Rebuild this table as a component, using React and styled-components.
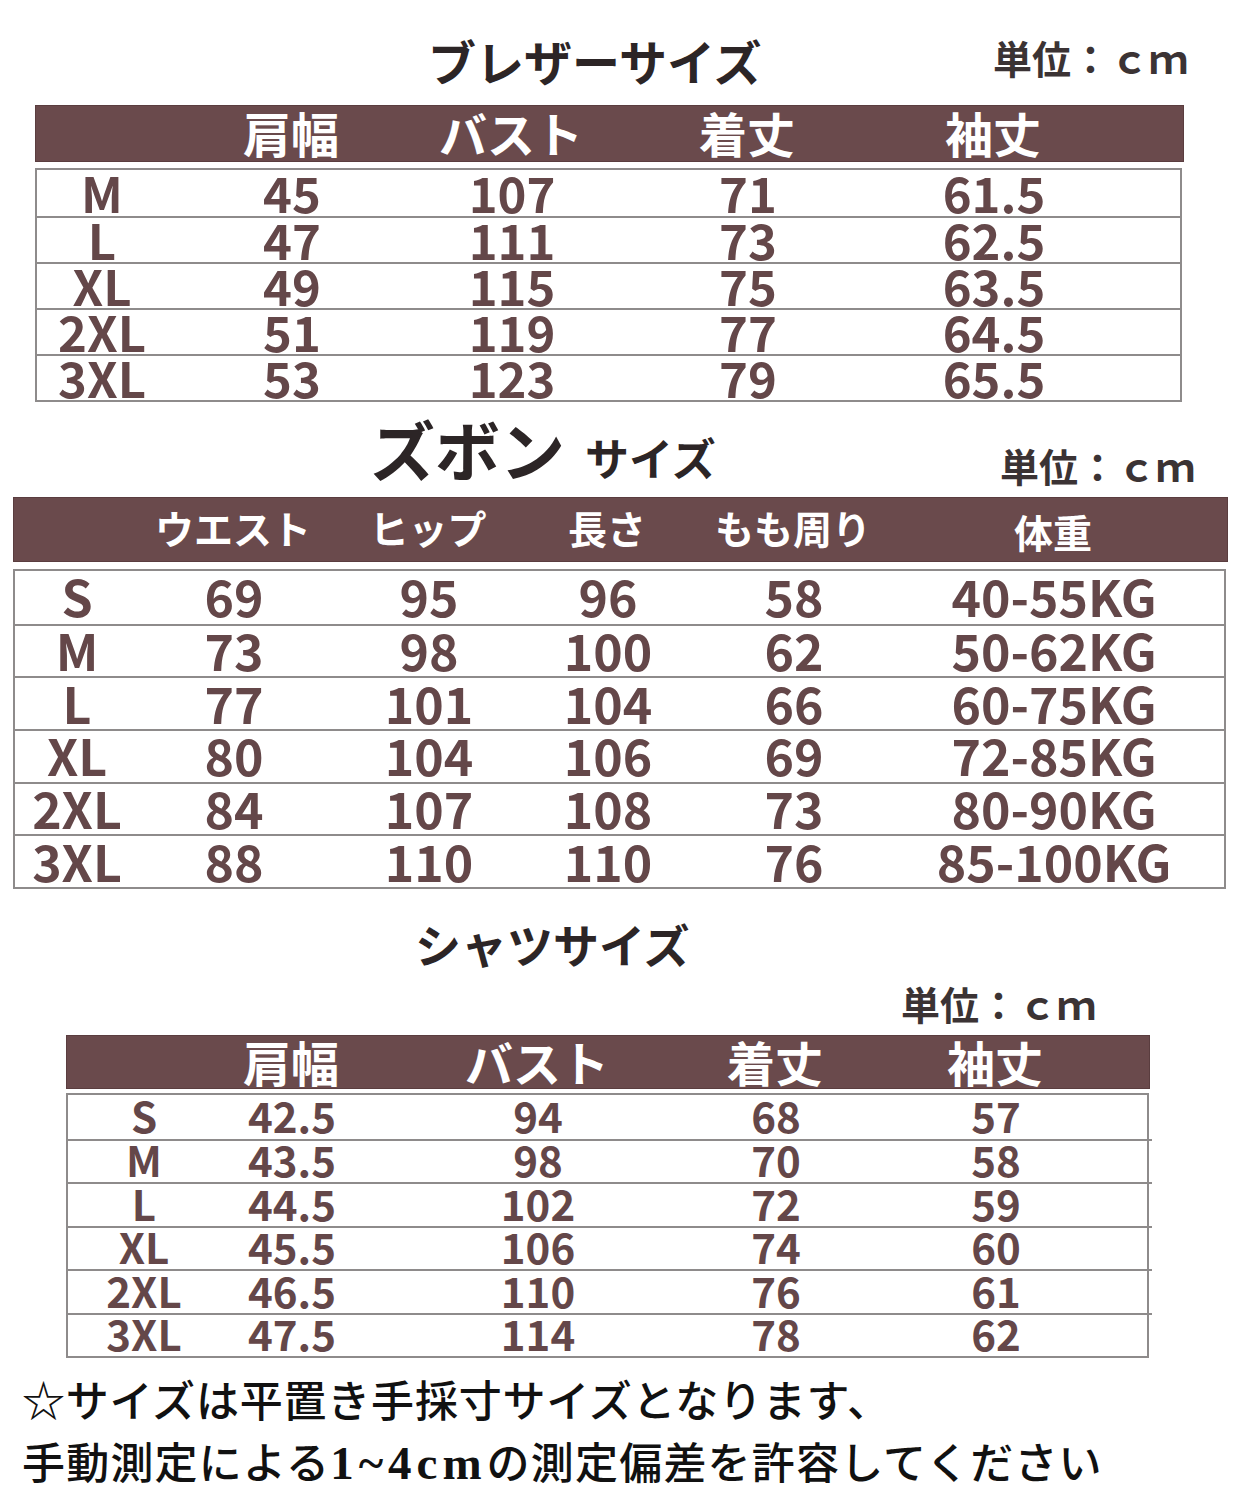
import React from 'react';
import styled, { createGlobalStyle } from 'styled-components';

const GlobalStyle = createGlobalStyle`
  html, body { margin: 0; padding: 0; background: #ffffff; }
  body { font-family: "Noto Sans CJK JP", "Noto Sans", sans-serif; }
`;

const BAR = '#6a4a4c';
const INK = '#644749';
const LINE = '#8e8b8b';

const Page = styled.div`
  width: 1243px;
  display: flex;
  flex-direction: column;
  background: #fff;
`;

const TitleRow = styled.div`
  height: ${p => p.$h}px;
  display: flex;
  flex-direction: ${p => (p.$stack ? 'column' : 'row')};
  align-items: flex-start;
`;

const Title = styled.div`
  margin-left: ${p => p.$left}px;
  margin-top: ${p => p.$top}px;
  font-size: ${p => p.$fs}px;
  font-weight: 700;
  line-height: 1;
  color: #2c2526;
  white-space: nowrap;
`;

const Small = styled.span`
  font-size: ${p => p.$fs}px;
  margin-left: ${p => p.$gap}px;
`;

const Unit = styled.div`
  margin-left: auto;
  margin-right: ${p => p.$right}px;
  margin-top: ${p => p.$top}px;
  align-self: ${p => (p.$stack ? 'flex-end' : 'auto')};
  font-size: 39px;
  font-weight: 700;
  line-height: 1;
  color: #3b3334;
  white-space: nowrap;
`;

const HeaderBar = styled.div`
  margin-left: ${p => p.$left}px;
  width: ${p => p.$width}px;
  height: ${p => p.$h}px;
  box-sizing: border-box;
  background: ${BAR};
  border: 1px solid #5a3d3f;
  display: grid;
  grid-template-columns: ${p => p.$cols};
  align-items: center;
  color: #ffffff;
`;

const HeadCell = styled.div`
  font-size: ${p => p.$fs}px;
  font-weight: 700;
  line-height: 1;
  text-align: center;
  white-space: nowrap;
  transform: translateY(${p => p.$dy}px);
`;

const Body = styled.div`
  margin-left: ${p => p.$left}px;
  margin-top: ${p => p.$gap}px;
  width: ${p => p.$width}px;
  height: ${p => p.$h}px;
  box-sizing: border-box;
  border: 2px solid ${LINE};
  display: grid;
  grid-template-rows: repeat(${p => p.$n}, minmax(0, 1fr));
`;

const Row = styled.div`
  display: grid;
  grid-template-columns: ${p => p.$cols};
  align-items: center;
  min-height: 0;
  & + & { border-top: 2px solid ${LINE}; }
`;

const Cell = styled.div`
  font-size: ${p => p.$fs}px;
  font-weight: 700;
  line-height: 1;
  height: 0;
  display: flex;
  align-items: center;
  justify-content: center;
  color: ${INK};
  white-space: nowrap;
  transform: translateY(${p => p.$dy}px);
`;

const Footer = styled.div`
  padding: 15px 0 0 22px;
  font-family: "Liberation Serif", "Noto Sans CJK JP", serif;
  font-size: 43px;
  font-weight: 500;
  line-height: 60px;
  color: #111;
`;

const FooterLine = styled.div`
  white-space: nowrap;
  letter-spacing: ${p => p.$ls || 0}px;
`;

const Latin = styled.span`
  font-size: 47px;
  font-weight: 700;
  letter-spacing: 5px;
`;

const tpl = cols => cols.map(c => `${c}px`).join(' ') + ' 1fr';

const blazer = {
  left: 35, width: 1149, bodyWidth: 1147,
  cols: [130, 250, 190, 282, 210],
  heads: ['', '肩幅', 'バスト', '着丈', '袖丈'],
  rows: [
    ['M', '45', '107', '71', '61.5'],
    ['L', '47', '111', '73', '62.5'],
    ['XL', '49', '115', '75', '63.5'],
    ['2XL', '51', '119', '77', '64.5'],
    ['3XL', '53', '123', '79', '65.5'],
  ],
};

const pants = {
  left: 13, width: 1215, bodyWidth: 1213,
  cols: [124, 190, 200, 158, 214, 306],
  heads: ['', 'ウエスト', 'ヒップ', '長さ', 'もも周り', '体重'],
  rows: [
    ['S', '69', '95', '96', '58', '40-55KG'],
    ['M', '73', '98', '100', '62', '50-62KG'],
    ['L', '77', '101', '104', '66', '60-75KG'],
    ['XL', '80', '104', '106', '69', '72-85KG'],
    ['2XL', '84', '107', '108', '73', '80-90KG'],
    ['3XL', '88', '110', '110', '76', '85-100KG'],
  ],
};

const shirt = {
  left: 66, width: 1084, bodyWidth: 1083,
  cols: [152, 144, 348, 128, 312],
  heads: ['', '肩幅', 'バスト', '着丈', '袖丈'],
  rows: [
    ['S', '42.5', '94', '68', '57'],
    ['M', '43.5', '98', '70', '58'],
    ['L', '44.5', '102', '72', '59'],
    ['XL', '45.5', '106', '74', '60'],
    ['2XL', '46.5', '110', '76', '61'],
    ['3XL', '47.5', '114', '78', '62'],
  ],
};

function SizeTable({ data, headH, headFs, headDy, gap, bodyH, fs, dy }) {
  const cols = tpl(data.cols);
  return (
    <>
      <HeaderBar $left={data.left} $width={data.width} $h={headH} $cols={cols}>
        {data.heads.map((h, i) => (
          <HeadCell key={i} $fs={headFs} $dy={h === '体重' ? headDy + 4 : headDy}>{h}</HeadCell>
        ))}
      </HeaderBar>
      <Body $left={data.left} $width={data.bodyWidth} $h={bodyH} $gap={gap} $n={data.rows.length}>
        {data.rows.map((r, i) => (
          <Row key={i} $cols={cols}>
            {r.map((c, j) => (
              <Cell key={j} $fs={fs} $dy={dy}>{c}</Cell>
            ))}
          </Row>
        ))}
      </Body>
    </>
  );
}

export default function App() {
  return (
    <Page>
      <GlobalStyle />
      <TitleRow $h={105}>
        <Title $left={428} $top={36} $fs={48}>ブレザーサイズ</Title>
        <Unit $right={55} $top={38}>単位：ｃｍ</Unit>
      </TitleRow>
      <SizeTable data={blazer} headH={57} headFs={48} headDy={-2} gap={6} bodyH={234} fs={49} dy={-2} />

      <TitleRow $h={95}>
        <Title $left={370} $top={14} $fs={65}>
          ズボン<Small $fs={44} $gap={20}>サイズ</Small>
        </Title>
        <Unit $right={48} $top={44}>単位：ｃｍ</Unit>
      </TitleRow>
      <SizeTable data={pants} headH={65} headFs={39} headDy={-2} gap={7} bodyH={320} fs={50} dy={-2} />

      <TitleRow $h={146} $stack>
        <Title $left={415} $top={31} $fs={46}>シャツサイズ</Title>
        <Unit $right={147} $top={18} $stack>単位：ｃｍ</Unit>
      </TitleRow>
      <SizeTable data={shirt} headH={54} headFs={48} headDy={-1} gap={4} bodyH={265} fs={42} dy={-2} />

      <Footer>
        <FooterLine $ls={0.8}>☆サイズは平置き手採寸サイズとなります、</FooterLine>
        <FooterLine $ls={1.2}>手動測定による<Latin>1~4cm</Latin>の測定偏差を許容してください</FooterLine>
      </Footer>
    </Page>
  );
}
